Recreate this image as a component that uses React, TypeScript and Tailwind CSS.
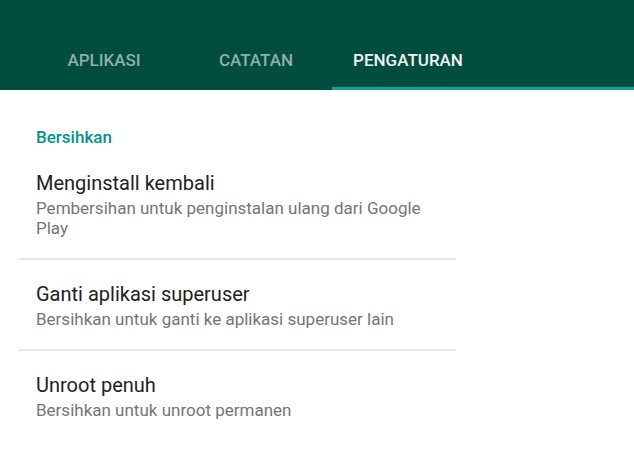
const tabs = [
  { label: 'APLIKASI', active: false },
  { label: 'CATATAN', active: false },
  { label: 'PENGATURAN', active: true },
];

const items = [
  { title: 'Menginstall kembali', desc: 'Pembersihan untuk penginstalan ulang dari Google Play' },
  { title: 'Ganti aplikasi superuser', desc: 'Bersihkan untuk ganti ke aplikasi superuser lain' },
  { title: 'Unroot penuh', desc: 'Bersihkan untuk unroot permanen' },
];

export default function App() {
  return (
    <div className="w-[634px] h-[464px] bg-white overflow-hidden font-['Roboto',sans-serif]">
      {/* Tab bar */}
      <div className="h-[90px] bg-[#004d40] flex items-end pl-[28px]">
        {tabs.map((t) => (
          <div
            key={t.label}
            className={`h-[58px] flex flex-col justify-between ${t.active ? 'flex-1' : 'w-[152px]'}`}
          >
            <div
              className={`h-[55px] pt-[3px] flex items-center w-[152px] justify-center text-[17px] font-medium ${
                t.active ? 'text-[#f0f3f2]' : 'text-[#8fb0a9]'
              }`}
            >
              {t.label}
            </div>
            <div className={`h-[3px] ${t.active ? 'bg-[#14a392]' : ''}`} />
          </div>
        ))}
      </div>

      {/* Settings list */}
      <div className="w-[456px] pt-[37px]">
        <div className="pl-[36px] text-[17px] leading-5 font-medium text-[#009688]">Bersihkan</div>
        {items.map((it, i) => (
          <div key={it.title}>
            {i > 0 && <div className="ml-[19px] h-[2px] bg-[#e6e6e6]" />}
            <div className={`pl-[36px] pr-[30px] pb-[20px] ${i === 0 ? 'pt-[24px]' : 'pt-[22px]'}`}>
              <div className="text-[20px] leading-6 text-[#212121]">{it.title}</div>
              <div className="text-[17px] leading-5 text-[#757575] mt-[3px]">{it.desc}</div>
            </div>
          </div>
        ))}
      </div>
    </div>
  );
}
